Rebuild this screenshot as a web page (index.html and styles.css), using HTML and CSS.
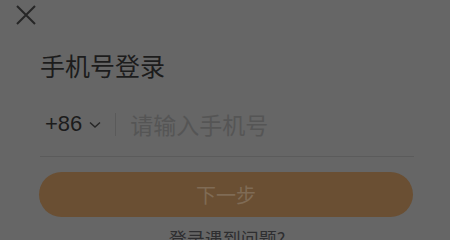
FILE: index.html
```html
<!DOCTYPE html>
<html lang="zh-CN">
<head>
  <meta charset="UTF-8">
  <title>手机号登录</title>
  <link rel="stylesheet" href="styles.css">
</head>
<body>
  <div class="sheet">
    <button class="close" aria-label="关闭">
      <svg width="22" height="22" viewBox="0 0 22 22">
        <path d="M2 2 L20 20 M20 2 L2 20" stroke="#262626" stroke-width="2" fill="none"/>
      </svg>
    </button>

    <h2 class="title">手机号登录</h2>

    <div class="phone-row">
      <span class="code">+86</span>
      <svg class="chevron" width="12" height="8" viewBox="0 0 12 8">
        <path d="M1 1.5 L6 6 L11 1.5" stroke="#262626" stroke-width="1.4" fill="none"/>
      </svg>
      <span class="divider"></span>
      <input type="tel" class="phone" placeholder="请输入手机号">
    </div>

    <button class="next" disabled>下一步</button>

    <p class="help">登录遇到问题?</p>
  </div>
</body>
</html>
```

FILE: styles.css
```css
html, body {
  margin: 0;
  padding: 0;
  background-color: #666666;
  font-family: "Noto Sans CJK SC", "Noto Sans", sans-serif;
}

.sheet {
  padding: 0 36px 0 40px;
  height: 240px;
  overflow: hidden;
}

.close {
  display: block;
  margin: 4px 0 0 -25px;
  padding: 0;
  border: none;
  background: none;
  width: 22px;
  height: 22px;
}

.close svg {
  display: block;
}

.title {
  margin: 21px 0 0 0;
  font-size: 25px;
  font-weight: 400;
  line-height: 36px;
  color: #1c1c1c;
}

.phone-row {
  display: flex;
  align-items: center;
  height: 56px;
  margin-top: 13px;
  padding: 0 0 4px 5px;
  border-bottom: 1px solid #5b5b5b;
}

.code {
  font-family: "Liberation Sans", "Noto Sans", sans-serif;
  font-size: 22px;
  color: #1c1c1c;
}

.chevron {
  margin: 2px 0 0 7px;
}

.divider {
  width: 1px;
  height: 23px;
  margin: 0 14px 0 14px;
  background-color: #5a5a5a;
}

.phone {
  flex: 1;
  min-width: 0;
  border: none;
  outline: none;
  background: none;
  padding: 0;
  font-family: "Noto Sans CJK SC", sans-serif;
  font-size: 23px;
  color: #1c1c1c;
}

.phone::placeholder {
  color: #555555;
}

.next {
  display: block;
  width: 100%;
  height: 45px;
  margin-top: 15px;
  margin-left: -1px;
  border: none;
  border-radius: 23px;
  background-color: #6a4f33;
  color: #7f6b55;
  font-family: "Noto Sans CJK SC", sans-serif;
  font-size: 20px;
}

.help {
  margin: 9px 0 0 0;
  text-align: center;
  font-size: 18px;
  line-height: 24px;
  color: #2e2e30;
}
```
